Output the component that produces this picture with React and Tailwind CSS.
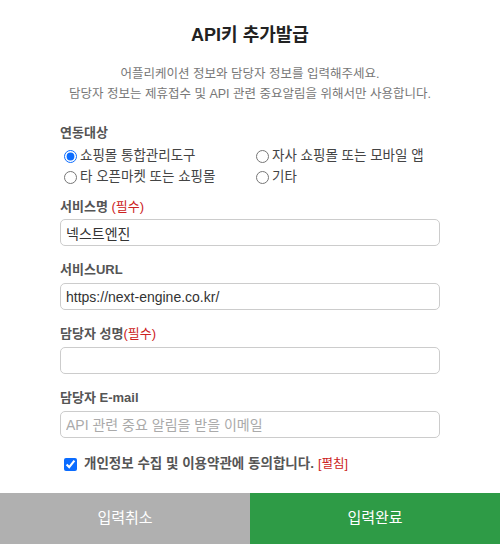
export default function App() {
  const font = { fontFamily: '"Liberation Sans", "Noto Sans CJK KR", sans-serif' };
  const inputCls =
    "block h-[27px] w-full rounded-[5px] border border-[#cccccc] bg-white px-[5px] text-[14px] text-[#333] outline-none placeholder:text-[#aaaaaa]";
  const labelCls = "text-[13px] font-bold text-[#555]";

  return (
    <div className="flex h-[544px] w-[500px] flex-col bg-white" style={font}>
      <div className="flex-1 px-[60px]">
        <h1 className="pt-[23px] text-center text-[18px] font-bold leading-[24px] text-[#222]">API키 추가발급</h1>
        <p className="mt-[17px] text-center text-[12.5px] leading-[20px] text-[#777]">
          어플리케이션 정보와 담당자 정보를 입력해주세요.
          <br />
          담당자 정보는 제휴접수 및 API 관련 중요알림을 위해서만 사용합니다.
        </p>

        <div className="mt-[19px]">
          <p className={`${labelCls} leading-[20px]`}>연동대상</p>
          <div className="mt-[3px] grid grid-cols-[192px_1fr] gap-y-[1px] pl-[4px] text-[13.5px] leading-[20px] text-[#444]">
            {[
              ["쇼핑몰 통합관리도구", true],
              ["자사 쇼핑몰 또는 모바일 앱", false],
              ["타 오픈마켓 또는 쇼핑몰", false],
              ["기타", false],
            ].map(([t, c]) => (
              <label key={t} className="flex items-center gap-[1px]">
                <input type="radio" name="target" defaultChecked={c} className="m-0 h-[13px] w-[13px] accent-[#0b6cff]" />
                <span className="ml-[2px]">{t}</span>
              </label>
            ))}
          </div>
        </div>

        <div className="mt-[10px]">
          <p className={`${labelCls} leading-[20px]`}>
            서비스명 <span className="font-normal text-[#cc2222]">(필수)</span>
          </p>
          <input className={`${inputCls} mt-[2px]`} defaultValue="넥스트엔진" />
        </div>

        <div className="mt-[14px]">
          <p className={`${labelCls} leading-[20px]`}>서비스URL</p>
          <input className={`${inputCls} mt-[3px]`} defaultValue="https://next-engine.co.kr/" />
        </div>

        <div className="mt-[14px]">
          <p className={`${labelCls} leading-[20px]`}>
            담당자 성명<span className="font-normal text-[#cc2222]">(필수)</span>
          </p>
          <input className={`${inputCls} mt-[3px]`} />
        </div>

        <div className="mt-[14px]">
          <p className={`${labelCls} leading-[20px]`}>담당자 E-mail</p>
          <input className={`${inputCls} mt-[3px]`} placeholder="API 관련 중요 알림을 받을 이메일" />
        </div>

        <label className="mt-[16px] flex items-center pl-[4px] text-[13.5px] leading-[20px]">
          <input type="checkbox" defaultChecked className="m-0 h-[13px] w-[13px] accent-[#0b6cff]" />
          <span className="ml-[7px] font-bold text-[#555]">개인정보 수집 및 이용약관에 동의합니다.</span>
          <span className="ml-[4px] text-[12.5px] text-[#cc2222]">[펼침]</span>
        </label>
      </div>

      <div className="flex h-[51px]">
        <button className="flex-1 bg-[#b0b0b0] text-[15px] text-white">입력취소</button>
        <button className="flex-1 bg-[#2e9b46] text-[15px] text-white">입력완료</button>
      </div>
    </div>
  );
}
